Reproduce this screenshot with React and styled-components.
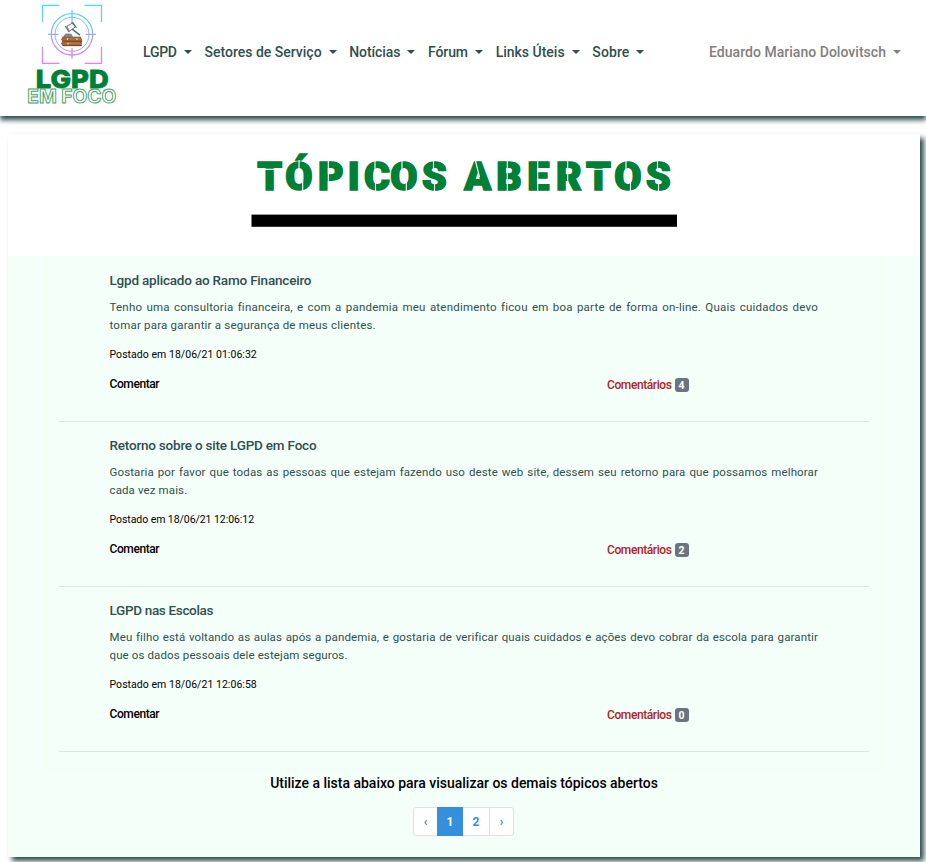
import React from "react";
import styled, { createGlobalStyle } from "styled-components";

const SLATE = "#2f4f4f";
const GREEN = "#008037";

const GlobalStyle = createGlobalStyle`
  *, *::before, *::after { box-sizing: border-box; }
  body { margin: 0; background: #fff; font-family: Roboto, "Noto Sans", sans-serif; color: #000; overflow: hidden; }
  h1, h2, p { margin: 0; }
  a { color: inherit; text-decoration: none; }
`;

const Page = styled.div`
  height: 862px;
  overflow: hidden;
`;

const Header = styled.header`
  display: flex;
  align-items: flex-start;
  height: 116px;
  padding: 0 25px 0 26px;
  background: #fff;
  box-shadow: 0 4px 5px ${SLATE};
`;

const LogoArt = styled.svg`
  flex: none;
  width: 92px;
  height: 108px;
`;

const Nav = styled.nav`
  display: flex;
  flex: 1;
  gap: 12.7px;
  padding: 41px 0 0 25px;
`;

const NavLink = styled.a`
  display: flex;
  align-items: center;
  height: 22px;
  font-size: 14px;
  font-weight: 500;
  white-space: nowrap;
  color: ${(p) => (p.$muted ? "#808080" : SLATE)};
  letter-spacing: ${(p) => p.$track || 0}px;
  margin-left: ${(p) => (p.$muted ? "auto" : "0")};

  &::after {
    content: "";
    margin: 0 0 1px 7px;
    border: 4px solid transparent;
    border-top-color: currentColor;
    border-bottom: 0;
  }
`;

const Card = styled.main`
  width: 912px;
  height: 723px;
  margin: 18px 0 0 8px;
  background: #f5fffa;
  box-shadow: 4px 4px 5px ${SLATE};
`;

const Banner = styled.h1`
  display: flex;
  justify-content: center;
  height: 122px;
  background: #fff;
`;

const BannerArt = styled.svg`
  width: 912px;
  height: 122px;
`;

const Topics = styled.section`
  width: 837px;
  height: 513px;
  margin-left: 38px;
  padding: 0 13px 0 12px;
  border: 1px solid #f0fff0;
  border-top: 0;
`;

const Topic = styled.article`
  height: 165px;
  margin-top: ${(p) => (p.$first ? "1px" : "0")};
  padding: 13px 51px 0 50.5px;
  border-bottom: 1px solid #dce6e1;
`;

const TopicTitle = styled.h2`
  font-size: 13.5px;
  font-weight: 500;
  line-height: 20px;
  letter-spacing: ${(p) => p.$track}px;
  color: ${SLATE};
`;

const TopicText = styled.p`
  margin-top: 8px;
  font-size: 11.5px;
  line-height: 18px;
  letter-spacing: ${(p) => p.$track}px;
  text-align: justify;
  color: ${SLATE};
`;

const Posted = styled.p`
  margin-top: 13px;
  font-size: 10.5px;
  line-height: 16px;
  letter-spacing: ${(p) => p.$track}px;
`;

const Actions = styled.div`
  display: grid;
  grid-template-columns: 497.5px 1fr;
  align-items: center;
  height: 18px;
  margin-top: 12px;
  font-size: 12px;
  font-weight: 500;
  letter-spacing: -0.4px;
`;

const Comments = styled.a`
  display: flex;
  align-items: center;
  gap: 3px;
  padding-top: 2px;
  color: #b22222;
`;

const Badge = styled.span`
  display: grid;
  place-items: center;
  width: 14px;
  height: 14px;
  border-radius: 3px;
  background: #6c757d;
  color: #fff;
  font-size: 10.5px;
  font-weight: 700;
  letter-spacing: 0;
`;

const Hint = styled.p`
  margin-top: 3px;
  font-size: 14px;
  font-weight: 500;
  line-height: 20px;
  text-align: center;
  letter-spacing: -0.01px;
`;

const Pagination = styled.nav`
  display: flex;
  width: 101px;
  height: 29px;
  margin: 14px 0 0 405px;
  border: 1px solid #dee2e6;
  border-radius: 3px;
  background: #fff;
`;

const PageLink = styled.a`
  display: grid;
  place-items: center;
  flex: ${(p) => (p.$wide ? "0 0 26px" : "1")};
  margin: ${(p) => (p.$active ? "-1px 0" : "0")};
  border-left: ${(p) => (p.$divided ? "1px solid #dee2e6" : "0")};
  background: ${(p) => (p.$active ? "#3490dc" : "transparent")};
  color: ${(p) => (p.$active ? "#fff" : p.$disabled ? "#6c757d" : "#3490dc")};
  font-size: 12px;
  font-weight: 700;
`;

function Logo() {
  return (
    <LogoArt viewBox="26 0 92 108" role="img" aria-label="LGPD em Foco">
      <defs>
        <linearGradient id="scope" gradientUnits="userSpaceOnUse" x1="0" y1="5" x2="0" y2="64">
          <stop offset="0" stopColor="#45e0fa" />
          <stop offset="0.5" stopColor="#92aefa" />
          <stop offset="1" stopColor="#e87df8" />
        </linearGradient>
      </defs>
      <g fill="none" stroke="url(#scope)" strokeWidth="1.3">
        <path d="M59.5 5.3H42.5V22M84.5 5.3H101.5V22M42.5 47V63.4H59.5M84.5 63.4H101.5V47" />
        <circle cx="72" cy="34.3" r="20.7" />
        <circle cx="72" cy="34.3" r="17" strokeWidth="1" />
        <path d="M72 10V22M72 48V58.5M48 34.3H58.5M85.5 34.3H96" />
      </g>
      <path d="M62.5 37.2H81L82.3 40.5 81.6 46H62.5L61 43.5 62.3 41.2 61 39.2Z" fill="#a96535" />
      <path d="M62.5 41.2H82M63 45.7H82M62.5 37.2H81" stroke="#59412f" strokeWidth=".8" fill="none" />
      <path d="M66 38.7H80M66 43.2H80" stroke="#c98a52" strokeWidth=".7" />
      <path d="M67.5 38.2V40M68 42.8V44.5M77 38.2V40" stroke="#eee" strokeWidth="1" />
      <path d="M72.2 29.2L80 35.2" stroke="#50745f" strokeWidth="1.5" />
      <path d="M66.8 26.2L73.2 22.6 75.5 26.8 69.2 31.3Z" fill="#f4f4f4" stroke="#555" strokeWidth=".8" />
      <path d="M65.2 26L69.2 32.2M71.7 22.2L76.5 27.8" stroke="#666" strokeWidth="1.1" />
      <path d="M63.5 36.7L65.5 34H71L72.5 36.7Z" fill="#888" stroke="#666" strokeWidth=".6" />
      <text x="35.7" y="88.2" fontFamily="Inter, sans-serif" fontSize="25" fontWeight="800" fill={GREEN} stroke={GREEN} strokeWidth=".8" textLength="73" lengthAdjust="spacingAndGlyphs">LGPD</text>
      <text x="27.3" y="103.3" fontFamily="Inter, sans-serif" fontSize="18.4" fontWeight="700" fill="#fff" stroke="#44a16b" strokeWidth=".9" textLength="89" lengthAdjust="spacingAndGlyphs">EM FOCO</text>
    </LogoArt>
  );
}

function StencilTitle() {
  return (
    <BannerArt viewBox="8 134 912 122">
      <text
        x="257.3 285.3 318 347.8 363.9 390.3 422 464.3 496.3 527.3 556 586 614.3 646"
        y="190.3"
        fontFamily="Roboto, sans-serif"
        fontSize="39.5"
        fontWeight="900"
        fill={GREEN}
        stroke={GREEN}
        strokeWidth="1.6"
      >
        TÓPICOSABERTOS
      </text>
      <path
        d="M257 169.4H283M585 169.4H612M299 160V172M302.7 178V192M328.3 160V192M375 160V171M375.5 182V192M402 160V172M406.3 178V192M433.5 160V170M434.5 182V192M475.5 161L479.5 177M507.3 160V192M537.7 160V192M567.7 160V192M626 160V172M630.5 178V192M657.5 160V170M658.5 182V192"
        stroke="#fff"
        strokeWidth="1.1"
        fill="none"
      />
      <rect x="251.5" y="214.6" width="425.5" height="12.2" fill="#000" />
    </BannerArt>
  );
}

const links = [
  ["LGPD", -0.24],
  ["Setores de Serviço", 0],
  ["Notícias", -0.1],
  ["Fórum", -0.1],
  ["Links Úteis", 0],
  ["Sobre", 0.1],
];

const topics = [
  {
    title: "Lgpd aplicado ao Ramo Financeiro",
    titleTrack: -0.2,
    text: "Tenho uma consultoria financeira, e com a pandemia meu atendimento ficou em boa parte de forma on-line. Quais cuidados devo tomar para garantir a segurança de meus clientes.",
    textTrack: 0.21,
    posted: "Postado em 18/06/21 01:06:32",
    postedTrack: 0.04,
    comments: 4,
  },
  {
    title: "Retorno sobre o site LGPD em Foco",
    titleTrack: -0.21,
    text: "Gostaria por favor que todas as pessoas que estejam fazendo uso deste web site, dessem seu retorno para que possamos melhorar cada vez mais.",
    textTrack: 0.12,
    posted: "Postado em 18/06/21 12:06:12",
    postedTrack: -0.06,
    comments: 2,
  },
  {
    title: "LGPD nas Escolas",
    titleTrack: -0.33,
    text: "Meu filho está voltando as aulas após a pandemia, e gostaria de verificar quais cuidados e ações devo cobrar da escola para garantir que os dados pessoais dele estejam seguros.",
    textTrack: 0.12,
    posted: "Postado em 18/06/21 12:06:58",
    postedTrack: 0.04,
    comments: 0,
  },
];

export default function App() {
  return (
    <Page>
      <GlobalStyle />
      <Header>
        <Logo />
        <Nav>
          {links.map(([label, track]) => (
            <NavLink key={label} href="#" $track={track}>{label}</NavLink>
          ))}
          <NavLink href="#" $muted $track={0.03}>Eduardo Mariano Dolovitsch</NavLink>
        </Nav>
      </Header>
      <Card>
        <Banner aria-label="Tópicos Abertos"><StencilTitle /></Banner>
        <Topics>
          {topics.map((t, i) => (
            <Topic key={t.title} $first={i === 0}>
              <TopicTitle $track={t.titleTrack}>{t.title}</TopicTitle>
              <TopicText $track={t.textTrack}>{t.text}</TopicText>
              <Posted $track={t.postedTrack}>{t.posted}</Posted>
              <Actions>
                <a href="#">Comentar</a>
                <Comments href="#">Comentários <Badge>{t.comments}</Badge></Comments>
              </Actions>
            </Topic>
          ))}
        </Topics>
        <Hint>Utilize a lista abaixo para visualizar os demais tópicos abertos</Hint>
        <Pagination>
          <PageLink $disabled>‹</PageLink>
          <PageLink href="#" $wide $active>1</PageLink>
          <PageLink href="#" $wide>2</PageLink>
          <PageLink href="#" $divided>›</PageLink>
        </Pagination>
      </Card>
    </Page>
  );
}
